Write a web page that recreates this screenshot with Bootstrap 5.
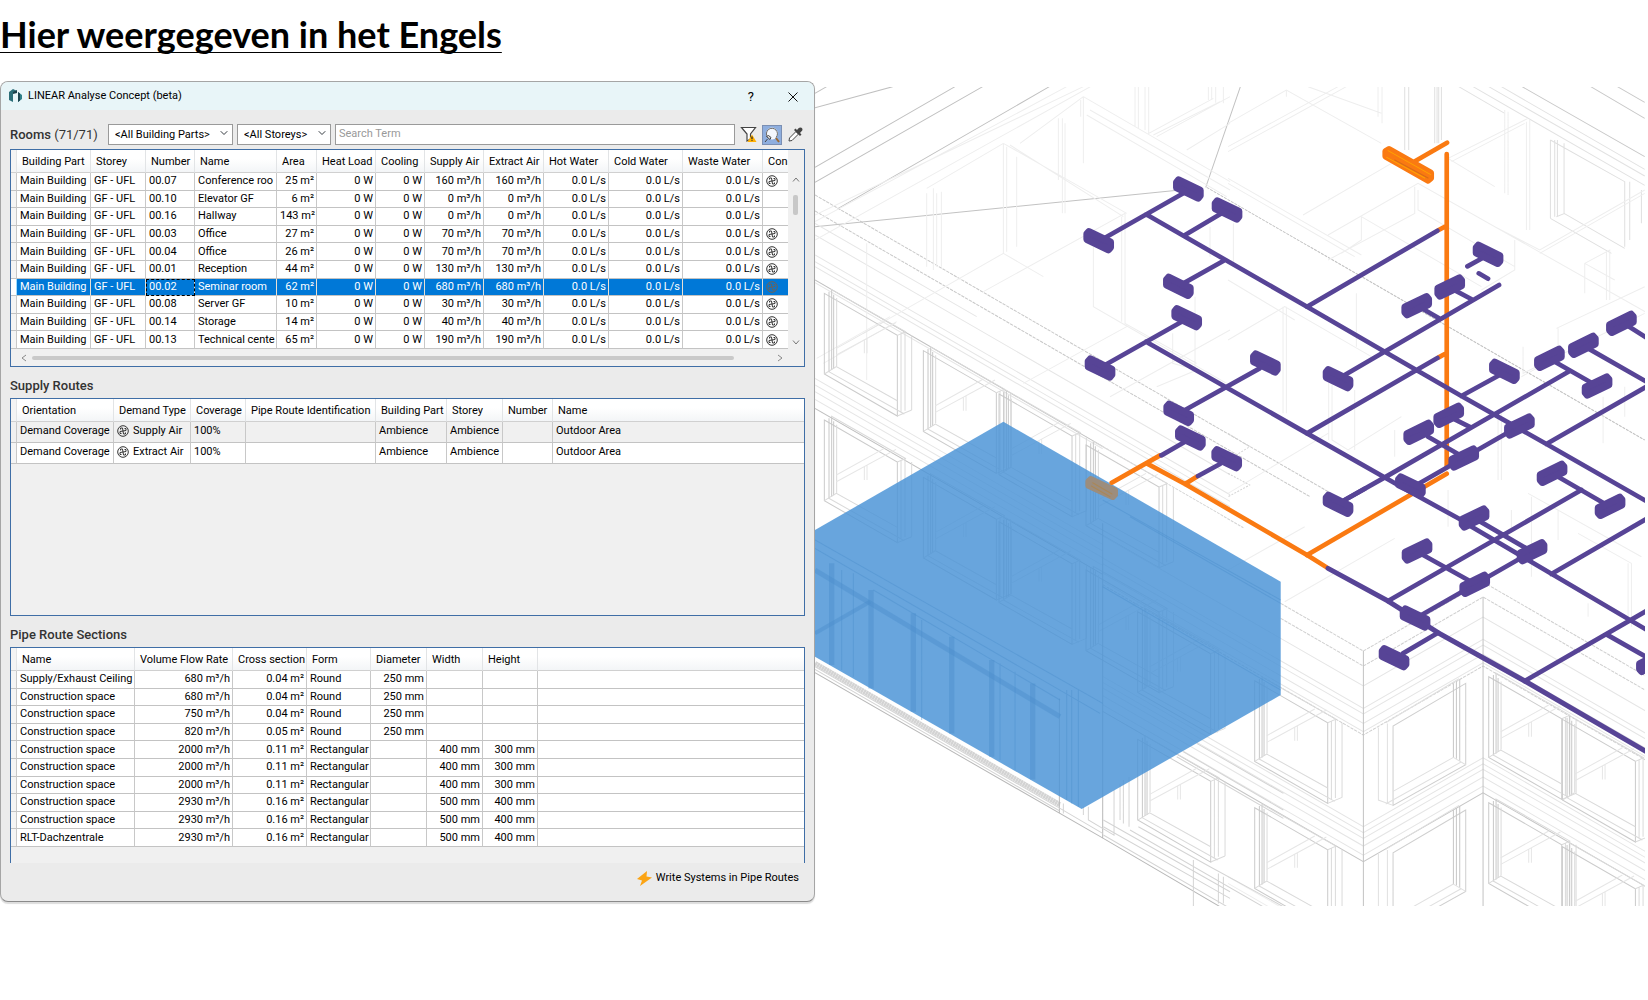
<!DOCTYPE html>
<html lang="nl">
<head>
<meta charset="utf-8">
<meta name="viewport" content="width=device-width, initial-scale=1">
<title>LINEAR Analyse Concept</title>
<link href="https://cdn.jsdelivr.net/npm/bootstrap@5.3.0/dist/css/bootstrap.min.css" rel="stylesheet">
<style>
  body { font-family: Roboto, "Open Sans", sans-serif; color: #000; background: #fff; }
  .page-title { font: 700 36px/40px Lato, sans-serif; padding-top: 14px; margin-bottom: 27px; text-decoration: underline; text-decoration-thickness: 1px; text-underline-offset: 4px; text-decoration-skip-ink: none; }
  .stage { align-items: flex-start; }
  .dialog { flex: 0 0 49.45%; min-width: 800px; background: #ebebeb; border: 1px solid #a5a5a5; border-bottom-color: #8a8a8a; border-radius: 8px; box-shadow: 0 2px 1px #ddd; overflow: hidden; font-size: 11px; line-height: 16px; }
  .titlebar { height: 28px; background: #e8f5f8; padding: 0 0 0 8px; }
  .titlebar button { width: 42px; height: 26px; padding: 0; border: 0; background: none; line-height: 1; font-size: 13px; }
  .app-mark { margin-right: 6px; }
  .dialog-body { padding: 14px 9px 13px; }
  .section-title { font-size: 13px; line-height: 20px; font-weight: 500; color: #333; margin: 9px 0 2px; }
  .toolbar { height: 21px; gap: 4px; margin-bottom: 4px; }
  .toolbar .section-title { width: 94px; margin: 0; }
  .toolbar .form-select, .toolbar .form-control { height: 21px; min-height: 21px; font-size: 11px; line-height: 16px; border: 1px solid #9a9a9a; border-radius: 0; padding: 1px 6px; color: #000; }
  .toolbar .form-select { width: 125px; background-size: 8px 8px; background-position: right 4px top 4px; padding-right: 14px; }
  .toolbar .form-select.storeys { width: 94px; }
  .toolbar .form-control { width: auto; min-width: 0; flex: 1; padding: 0 3px 2px; }
  .toolbar .form-control::placeholder { color: #999; }
  .tool { width: 19px; height: 20px; padding: 0; border: 0; background: none; display: flex; align-items: center; justify-content: center; }
  .tool.pressed { width: 20px; background: #8eaede; border: 1px solid #7b8fb3; }
  .panel { border: 1px solid #3f6ea6; background: #f0f0f0; height: 218px; }
  .panel.open-end { border-bottom: 0; height: 216px; }
  .grid-clip { overflow: hidden; flex: 1; min-width: 0; }
  table.datagrid { table-layout: fixed; width: 100%; border-collapse: separate; border-spacing: 0; background: #fff; }
  .datagrid th, .datagrid td { font-weight: 400; padding: 0 2px 0 3px; height: 17px; line-height: 16px; white-space: nowrap; overflow: hidden; border-right: 1px solid #c8c8c8; border-bottom: 1px solid #c3c3c3; }
  .datagrid th { height: 22px; line-height: 20px; padding: 2px 0 0 5px; background: linear-gradient(#fff 40%, #f3f5f7); border-right-color: #e2e4e6; border-bottom-color: #d0d0d0; }
  .datagrid td:first-child, .datagrid th:first-child { padding: 0; background: #f4f4f4; }
  .datagrid td.num { text-align: right; }
  .ten-rows { height: 199px; }
  .chosen td { background: #0078d7; color: #fff; border-right-color: #e8e0d4; }
  .chosen td:first-child { background: #fff; border-right-color: #9fdcff; }
  .chosen .focus-cell { outline: 1px dashed #000; outline-offset: -1px; }
  .chosen .fan { color: #76604f; }
  .datagrid.routes td { height: 21px; line-height: 18px; vertical-align: top; }
  .datagrid.routes tr.muted-row td { background: #f0f0f0; }
  .datagrid .filler { border-right: 0; }
  .fan { width: 12px; height: 12px; color: #333; display: block; }
  .v-scroll { width: 16px; padding: 27px 0 4px; }
  .v-thumb { width: 5px; height: 20px; border-radius: 2px; background: #c8c8c8; margin-top: 13px; }
  .h-scroll { height: 17px; padding: 0 20px 0 9px; }
  .h-thumb { height: 4px; border-radius: 2px; background: #c9c9c9; flex: 1; margin: 0 42px 0 4px; }
  .write-btn { border: 0; background: none; padding: 0 6px; font-size: 11px; line-height: 20px; margin-top: 5px; }
  .scene { flex: 1 1 0; min-width: 0; margin: 6px 3px 0 0; }
  .scene svg { display: block; width: 100%; height: auto; }
</style>
<script src="https://cdn.jsdelivr.net/npm/bootstrap@5.3.0/dist/js/bootstrap.bundle.min.js"></script>
</head>
<body>
<svg width="0" height="0" class="position-absolute" aria-hidden="true">
  <symbol id="fan" viewBox="0 0 12 12"><circle cx="6" cy="6" r="5.300" fill="none" stroke="currentColor"/><path d="M6 6 5.500 3H3.500V4.500M6 6 9 5.500V3.500H7.500M6 6 6.500 9H8.500V7.500M6 6 3 6.500V8.500H4.500" fill="none" stroke="currentColor"/></symbol>
</svg>

<h1 class="page-title">Hier weergegeven in het Engels</h1>

<main class="stage d-flex">
  <section class="dialog" aria-label="LINEAR Analyse Concept (beta)">
    <header class="titlebar d-flex align-items-center">
      <svg width="13" height="14" viewBox="0 0 13 14" class="app-mark"><path d="M0 3 4 0l4 2v2L4 3v10l-4-2Z" fill="#2b6e78"/><path d="M4 3 8 1v3L4 5Z" fill="#1c3f49"/><path d="M9 3l4 3v4l-4 3Z" fill="#2f7f88"/><path d="M9 3l2 1.500v7L9 13Z" fill="#1d4650"/></svg>
      <span class="me-auto">LINEAR Analyse Concept (beta)</span>
      <button type="button" aria-label="Help">?</button>
      <button type="button" aria-label="Close"><svg width="10" height="10" viewBox="0 0 10 10"><path d="M.5.5l9 9m0-9l-9 9" stroke="#111" fill="none"/></svg></button>
    </header>

    <div class="dialog-body">
      <div class="toolbar d-flex align-items-center">
        <h2 class="section-title">Rooms <span class="fw-normal">(71/71)</span></h2>
        <select class="form-select" aria-label="Building part"><option>&lt;All Building Parts&gt;</option></select>
        <select class="form-select storeys" aria-label="Storey"><option>&lt;All Storeys&gt;</option></select>
        <input class="form-control" type="text" placeholder="Search Term" aria-label="Search Term">
        <button class="tool" type="button" aria-label="Filter"><svg width="17" height="17" viewBox="0 0 17 17"><path d="M1.500 1.500h14L10.500 8v5l-3.500 2V8Z" fill="#fff" stroke="#444" stroke-width="1.200"/><path d="M12 8.500 16.500 16H7.500Z" fill="#ffb000"/><path d="M12 10.500v2.500m0 .8v1" stroke="#222" stroke-width="1.200"/></svg></button>
        <button class="tool pressed" type="button" aria-label="Zoom to room"><svg width="18" height="18" viewBox="0 0 18 18"><circle cx="9" cy="7.500" r="5.500" fill="#f4f7fc" stroke="#fff"/><path d="M4.500 11A5.500 5.500 0 1 1 13 11.500" fill="none" stroke="#666"/><path d="m13 12 3 4" stroke="#9b6a35" stroke-width="2"/><path d="M2 16l2.500-3M3.500 10.500l3.500 3 1-2-2.500-2Z" stroke="#444" fill="#ddd"/></svg></button>
        <button class="tool" type="button" aria-label="Pick"><svg width="15" height="15" viewBox="0 0 15 15"><path d="M1 14l.5-3L8 4.500 10.500 7 4 13.500Z" fill="#fff" stroke="#444"/><path d="M6 3l6 6 1.500-1.500L12 6l2-2.200Q15.200 2 13.500.8 12-.2 10.500 1.200L9 3 7.500 1.500Z" fill="#444"/></svg></button>
      </div>

      <div class="panel">
        <div class="d-flex">
          <div class="grid-clip">
            <table class="datagrid ten-rows" id="rooms">
              <colgroup><col style="width:6px"><col style="width:74px"><col style="width:55px"><col style="width:49px"><col style="width:82px"><col style="width:40px"><col style="width:59px"><col style="width:49px"><col style="width:59px"><col style="width:60px"><col style="width:65px"><col style="width:74px"><col style="width:80px"><col></colgroup>
              <thead><tr><th></th><th>Building Part</th><th>Storey</th><th>Number</th><th>Name</th><th>Area</th><th>Heat Load</th><th>Cooling</th><th>Supply Air</th><th>Extract Air</th><th>Hot Water</th><th>Cold Water</th><th>Waste Water</th><th class="filler">Con</th></tr></thead>
              <tbody></tbody>
            </table>
          </div>
          <div class="v-scroll d-flex flex-column align-items-center">
            <svg width="8" height="5" viewBox="0 0 8 5"><path d="M1 4.500l3-3.500 3 3.500" fill="none" stroke="#777"/></svg>
            <div class="v-thumb"></div>
            <svg class="mt-auto" width="8" height="5" viewBox="0 0 8 5"><path d="M1 .5L4 4 7 .5" fill="none" stroke="#777"/></svg>
          </div>
        </div>
        <div class="h-scroll d-flex align-items-center">
          <svg width="8" height="8" viewBox="0 0 8 8"><path d="M6 1L2 4l4 3" fill="none" stroke="#888"/></svg>
          <div class="h-thumb"></div>
          <svg width="8" height="8" viewBox="0 0 8 8"><path d="M2 1l4 3-4 3" fill="none" stroke="#888"/></svg>
        </div>
      </div>

      <h2 class="section-title">Supply Routes</h2>
      <div class="panel">
        <table class="datagrid routes">
          <colgroup><col style="width:6px"><col style="width:97px"><col style="width:77px"><col style="width:55px"><col style="width:130px"><col style="width:71px"><col style="width:56px"><col style="width:50px"><col></colgroup>
          <thead><tr><th></th><th>Orientation</th><th>Demand Type</th><th>Coverage</th><th>Pipe Route Identification</th><th>Building Part</th><th>Storey</th><th>Number</th><th class="filler">Name</th></tr></thead>
          <tbody>
            <tr class="muted-row"><td></td><td>Demand Coverage</td><td><span class="d-flex align-items-center gap-1"><svg class="fan"><use href="#fan"/></svg>Supply Air</span></td><td>100%</td><td></td><td>Ambience</td><td>Ambience</td><td></td><td class="filler">Outdoor Area</td></tr>
            <tr><td></td><td>Demand Coverage</td><td><span class="d-flex align-items-center gap-1"><svg class="fan"><use href="#fan"/></svg>Extract Air</span></td><td>100%</td><td></td><td>Ambience</td><td>Ambience</td><td></td><td class="filler">Outdoor Area</td></tr>
          </tbody>
        </table>
      </div>

      <h2 class="section-title">Pipe Route Sections</h2>
      <div class="panel open-end">
        <table class="datagrid ten-rows" id="sections">
          <colgroup><col style="width:6px"><col style="width:118px"><col style="width:98px"><col style="width:74px"><col style="width:64px"><col style="width:56px"><col style="width:56px"><col style="width:55px"><col></colgroup>
          <thead><tr><th></th><th>Name</th><th>Volume Flow Rate</th><th>Cross section</th><th>Form</th><th>Diameter</th><th>Width</th><th>Height</th><th class="filler"></th></tr></thead>
          <tbody></tbody>
        </table>
      </div>
      <div class="text-end"><button class="write-btn" type="button"><svg class="me-1" width="15" height="15" viewBox="0 0 15 15"><path d="M10 0 0 8l5 1.500L3 15 15 6.500 9.500 5.500Z" fill="#fba414"/></svg>Write Systems in Pipe Routes</button></div>
    </div>
  </section>

  <div class="scene">
  <svg viewBox="815 87 830 819" role="img" aria-label="Building model with pipe routes">
    <defs>
      <path id="nodeA" d="M-35-20-29-27 35 4V20L29 27-35-4Z"/>
      <path id="nodeB" d="M35-20 29-27-35 4V20L-29 27 35-4Z"/>
      <g id="win">
        <path d="M0 0 219 126V368L0 242Z" stroke="#cbcbcb"/>
        <path d="M14-5V236M22-10V230M28 4V226" stroke="#c8c8c8"/>
        <path d="M37 14V218M0 242 36 220 219 322M12 234 240 362M219 368 262 350M20-12 245 116M230 120V358M242 116V352M262 126V350M219 126 242 116" stroke="#dadada"/>
        <path d="M36 165 180 85M36 185 215 88M120 180V140M128 180V135" stroke="#e6e6e6"/>
      </g>
      <g id="winR">
        <path d="M0 0-218 128V366L0 244Z" stroke="#cfcfcf"/>
        <path d="M-18-12V232M-28-6V226M-37 0V222" stroke="#c6c6c6"/>
        <path d="M-37 222-218 324M0 244-37 222M-14 236-240 362M-235 120V358M-262 132V350L-218 366M-240 118-20-14" stroke="#e0e0e0"/>
      </g>
      <path id="level" d="M-376-451 0-234 406 0 765-207 1260 79"/>
    </defs>

    <!-- wireframe building -->
    <g fill="none" stroke-width="3">
      <g transform="translate(810 80) scale(.333333)">
        <path d="M15 262 435 20M15 307 518 20M85 385 718 20M15 40 50 20M15 83 248 20" stroke="#c0c0c0"/>
        <path d="M15 440 1110 330M1187 322 1291 20" stroke="#c2c2c2"/>
        <path d="M15 345 1260 1065 1560 1238M15 393 1260 1112 1500 1250" stroke="#c8c8c8" stroke-dasharray="10 3"/>
        <path d="M1190 322 2504 1080" stroke="#c2c2c2" stroke-dasharray="9 3"/>
        <path d="M15 600 878 1099M15 985 878 1483" stroke="#c0c0c0"/>
        <path d="M878 1099 1300 1343" stroke="#d4d4d4" stroke-dasharray="9 3"/>
        <path d="M15 608 878 1106M15 545 1260 1264M15 525 1260 1244M15 465 1260 1184M15 430 500 710M15 560 1260 1280M15 895 878 1393M15 915 878 1413M15 935 878 1433M15 958 878 1456" stroke="#e6e6e6"/>
        <path d="M15 425 770 20M15 405 820 20M15 480 850 15M40 850 260 725M20 835 240 710M170 490V900M350 340V560M370 325V570M380 340V560M394 335V560M580 190V520L160 760M590 200V515M580 190 950 400M600 195 940 410M580 190 350 325M620 230V500M580 520 700 590M520 635 945 400V730L1160 850M935 410V725M850 500V680L945 735M745 115V300M757 115V400M765 130V400M820 50V250M812 60V110M820 50 630 190M820 50 1260 305M830 105 1250 350M840 90 1260 330M975 20V140M985 20V145M1005 20V150M1016 20V160L1210 55M1030 165 1230 65M1195 20V60M1205 20V60M1217 20V68M1240 20V70M1040 170 1260 50M1130 210 1260 130M1155 650V870M1088 760V850L1160 870 1040 920M950 740 640 910M945 735 1250 910M900 950 1260 750M1200 440V530M1270 430V560" stroke="#eee"/>
        <use href="#win" x="43" y="640"/><use href="#win" x="340" y="812"/><use href="#win" x="567" y="942"/><use href="#win" x="828" y="1095"/>
        <use href="#win" x="43" y="1020"/><use href="#win" x="340" y="1192"/><use href="#win" x="567" y="1325"/><use href="#win" x="828" y="1470"/>
      </g>
      <g transform="translate(1228 80) scale(.333333)">
        <path d="M882 20 1250 230M1088 20 1250 115M1168 20 1250 67" stroke="#c8c8c8"/>
        <path d="M782 20 1250 288M820 20 1250 268M735 20 1250 316M692 20 830 100" stroke="#e2e2e2"/>
        <path d="M620 20V190M627 20V190M632 20V190M640 20V180M530 20V210M542 20V210M967 180V415M980 180V410M988 180V410M1008 190V400M967 180 1190 305V500M967 415 1150 520M1008 400 1190 505M985 410 1010 400M1205 305V480M1240 330V430" stroke="#dfdfdf"/>
        <path d="M0 130 175 30 460 190M0 215 355 20M0 200 330 20M175 30V50M240 20 460 100M462 20V130M450 20V110M225 405 490 250M900 115 660 235M890 130 670 245M905 120V450M895 125V450M660 235 800 320M300 465 570 310 1260 700M560 320V400L300 540M570 330V390L860 560M400 410V480L340 520M400 410 760 620M800 440 935 510 1250 330M860 480V570L760 630M935 520 1250 340M1070 550V640M1070 550 1145 510V660M1135 515V660M1070 550 1160 600M990 745V830L880 890M985 745 1250 620M885 800V880L1250 700M830 90V340M840 95V345M0 295 400 525M0 310 380 530M165 680V1000M175 680V1000M0 780 170 680 430 830M385 640V800M302 900V1080M312 900V1080L360 1110 520 1010M380 930V1110M500 1050V1130M0 1240 300 1060M0 600 200 720M1125 950V1090M1190 920V1010M810 1000V1200M820 1000V1200" stroke="#eee"/>
        <path d="M0 1060 65 1100 0 1140M0 1180 65 1215 0 1250" stroke="#d4d4d4" stroke-dasharray="6 4"/>
      </g>
      <g transform="translate(1228 490) scale(.333333)">
        <g stroke="#cfcfcf" stroke-dasharray="10 3"><path d="M158 340 406 483 765 276 1260 562"/><path d="M158 385 406 528 765 321 1260 605"/><use href="#level" y="735"/></g>
        <g stroke="#e5e5e5"><use href="#level" y="588"/><use href="#level" y="655"/><use href="#level" y="672"/><use href="#level" y="700"/><use href="#level" y="725"/><use href="#level" y="1010"/><use href="#level" y="1028"/><use href="#level" y="1045"/><use href="#level" y="1068"/><use href="#level" y="1095"/></g>
        <use href="#level" y="1115" stroke="#c6c6c6"/>
        <path d="M406 483V1250M765 320V1250" stroke="#c2c2c2"/>
        <path d="M660 0V110M850 60V120M1200 220V400M1210 220V410M1210 220 1050 130M900 10 1240 200M990 60V150M1080 340V380M910 20V260M0 240 230 110M170 335 500 145M0 1160 400 1390M0 1180 400 1410" stroke="#eee"/>
        <use href="#win" x="80" y="572"/><use href="#win" x="80" y="953"/><use href="#winR" x="713" y="580"/><use href="#winR" x="713" y="960"/>
        <use href="#win" x="782" y="560"/><use href="#win" x="1003" y="688"/><use href="#win" x="782" y="938"/><use href="#win" x="1003" y="1070"/>
      </g>
      <g transform="translate(810 490) scale(.333333)">
        <path d="M15 520 750 944" stroke="#d3d3d3" stroke-width="15" stroke-dasharray="7 1"/>
        <path d="M15 548 880 1045 1230 1250M878 100V1045M748 625V968" stroke="#b8b8b8"/>
        <path d="M15 530 750 955 878 1030M15 538 748 962M1150 1110V1250M880 1035 1260 1255M880 990 1260 1205M880 1010 1260 1225M835 950V990L912 1035V900M957 860V1010M940 870V1000M930 880V990M1100 800 1420 985M1120 785 1420 960M1160 760 1420 910M985 1010 1200 1130 1420 1250M960 1020 1420 1285M1225 1150V1240M1240 1160V1240M760 940V970M820 950V975" stroke="#d4d4d4"/>
        <use href="#win" x="983" y="365"/><use href="#win" x="983" y="748"/>
      </g>
    </g>

    <!-- selected room -->
    <g transform="translate(810 490) scale(.333333)">
      <path d="M580-205 1412 275V615L815 957 15 500V120Z" fill="#4b94d7" fill-opacity=".84"/>
      <g fill="none" stroke="#4b8ecd" stroke-opacity=".45">
        <path d="M15 240 750 680" stroke-width="15"/>
        <path d="M15 430 180 335" stroke-width="12"/>
        <path d="M65 220V525M183 300V595M310 370V665" stroke-width="16"/>
        <path d="M425 440V730M545 510V800M668 580V868" stroke-width="16"/>
        <path d="M95 240V540M130 250V560M335 390V690M570 520V810M615 545V840M770 600V930M785 600V940M805 600V950M15 150 878 640M15 175 870 670M878 290 1412 600M190 300 750 630M960 80 1412 340M878 30 1412 330" stroke-width="3"/>
      </g>
    </g>

    <!-- orange routes -->
    <g fill="none" stroke="#fa7a12" stroke-width="14" stroke-linecap="round" stroke-linejoin="round">
      <g transform="translate(810 80) scale(.333333)"><path d="M905 1208 1050 1126M1010 1150 1125 1212 1491 1425 1550 1462M1125 1212 1160 1190"/>
      <path d="M-40-19-33-26 40 8V21L33 28-40-6Z" transform="translate(875 1223)" fill="#9c8d7d" stroke="#9c8d7d" stroke-width="18"/><path d="M848 1208 906 1242M844 1218 900 1250" stroke="#aa8757" stroke-width="3"/></g>
      <g transform="translate(1228 80) scale(.333333)"><path d="M656 222V1162M562 243 657 188M632 450 650 440M632 832 650 822M656 1181 237 1425"/>
      <path d="M473 214 483 208 608 279V294L600 301 473 229Z" fill="#fa7a12" stroke-width="20"/><path d="M480 212 608 284M476 232 590 294" stroke="#ffa200" stroke-width="3"/><path d="M500 240 600 294" stroke="#d86d18" stroke-width="3"/></g>
    </g>

    <!-- purple routes -->
    <g fill="none" stroke="#574496" stroke-width="14" stroke-linecap="round" stroke-linejoin="round">
      <g transform="translate(810 80) scale(.333333)"><path d="M885 473 1120 340M1008 403 1491 680M1125 465 1235 400M1120 610 1245 540M885 855 1115 725M1008 785 1491 1060M1125 990 1349 865M1054 1126 1125 1085M1164 1188 1230 1152"/></g>
      <g transform="translate(1228 80) scale(.333333)"><path d="M237 680 470 815 700 948 955 1092 1270 1272M237 680 628 452M237 1060 547 1236 700 1320M237 1060 628 834M350 885 813 615M590 690 637 717M682 632 735 660M718 559 765 533M752 580 780 596M700 948 815 885M1025 873 465 1195 350 1260M980 845 1090 908M1080 805 1260 908M1200 738 1260 776M955 1092 1260 917M600 1070 690 1122M680 1018 728 1042M874 1038 560 1218M990 1190 1125 1268"/></g>
      <g transform="translate(1228 490) scale(.333333)"><path d="M350 30 410-4M1060 0 480 333M1260 84 970 252M700 92 900 210 1260 422M740 85 895 175M630 428 525 490M575 378 912 185M585 195 720 270M890 573 1260 360M1135 433 1260 504"/><path d="M300 235 480 333 630 428 890 573 1260 788" stroke-width="15"/></g>
    </g>

    <!-- outlets -->
    <g fill="#574496" stroke="#574496" stroke-width="22" stroke-linejoin="round">
      <g transform="translate(810 80) scale(.333333)">
        <use href="#nodeA" x="1135" y="327"/><use href="#nodeA" x="1251" y="390"/><use href="#nodeA" x="866" y="482"/><use href="#nodeA" x="1105" y="619"/><use href="#nodeA" x="1130" y="713"/><use href="#nodeA" x="870" y="864"/><use href="#nodeA" x="1106" y="1000"/><use href="#nodeA" x="1141" y="1074"/><use href="#nodeA" x="1250" y="1136"/>
      </g>
      <g transform="translate(1228 80) scale(.333333)">
        <use href="#nodeA" x="112" y="849"/><use href="#nodeA" x="330" y="896"/><use href="#nodeA" x="829" y="874"/><use href="#nodeA" x="780" y="523"/><use href="#nodeA" x="547" y="1218"/><use href="#nodeA" x="330" y="1273"/>
        <use href="#nodeB" x="665" y="621"/><use href="#nodeB" x="566" y="677"/><use href="#nodeB" x="1180" y="730"/><use href="#nodeB" x="1066" y="796"/><use href="#nodeB" x="964" y="835"/><use href="#nodeB" x="1107" y="918"/><use href="#nodeB" x="662" y="1006"/><use href="#nodeB" x="572" y="1057"/><use href="#nodeB" x="707" y="1134"/><use href="#nodeB" x="874" y="1038"/><use href="#nodeB" x="972" y="1180"/>
      </g>
      <g transform="translate(1228 490) scale(.333333)">
        <use href="#nodeA" x="561" y="384"/><use href="#nodeA" x="498" y="503"/>
        <use href="#nodeB" x="738" y="84"/><use href="#nodeB" x="567" y="183"/><use href="#nodeB" x="740" y="283"/><use href="#nodeB" x="912" y="185"/><use href="#nodeB" x="1146" y="49"/><use href="#nodeB" x="1270" y="517"/>
      </g>
    </g>
  </svg>
  </div>
</main>

<script>
  const fan = '<svg class="fan"><use href="#fan"/></svg>';
  const rooms = [
    ['00.07', 'Conference roo', 25, 160], ['00.10', 'Elevator GF', 6, 0], ['00.16', 'Hallway', 143, 0],
    ['00.03', 'Office', 27, 70], ['00.04', 'Office', 26, 70], ['00.01', 'Reception', 44, 130],
    ['00.02', 'Seminar room', 62, 680], ['00.08', 'Server GF', 10, 30], ['00.14', 'Storage', 14, 40],
    ['00.13', 'Technical cente', 65, 190]
  ];
  const num = v => `<td class="num">${v}</td>`;
  document.querySelector('#rooms tbody').innerHTML = rooms.map(([no, name, area, air]) => {
    const chosen = no === '00.02';
    return `<tr${chosen ? ' class="chosen"' : ''}><td></td><td>Main Building</td><td>GF - UFL</td><td${chosen ? ' class="focus-cell"' : ''}>${no}</td><td>${name}</td>` +
      num(area + ' m²') + num('0 W').repeat(2) + num(air + ' m³/h').repeat(2) + num('0.0 L/s').repeat(3) +
      `<td class="filler">${air ? fan : ''}</td></tr>`;
  }).join('');

  const sections = [
    ['Supply/Exhaust Ceiling', 680, '0.04', 'Round', 250], ['Construction space', 680, '0.04', 'Round', 250],
    ['Construction space', 750, '0.04', 'Round', 250], ['Construction space', 820, '0.05', 'Round', 250],
    ['Construction space', 2000, '0.11', 'Rectangular', 0, 400, 300], ['Construction space', 2000, '0.11', 'Rectangular', 0, 400, 300],
    ['Construction space', 2000, '0.11', 'Rectangular', 0, 400, 300], ['Construction space', 2930, '0.16', 'Rectangular', 0, 500, 400],
    ['Construction space', 2930, '0.16', 'Rectangular', 0, 500, 400], ['RLT-Dachzentrale', 2930, '0.16', 'Rectangular', 0, 500, 400]
  ];
  const mm = v => num(v ? v + ' mm' : '');
  document.querySelector('#sections tbody').innerHTML = sections.map(([name, flow, cross, form, d, w, h]) =>
    `<tr><td></td><td>${name}</td>${num(flow + ' m³/h')}${num(cross + ' m²')}<td>${form}</td>${mm(d)}${mm(w)}${mm(h)}<td class="filler"></td></tr>`
  ).join('');
</script>
</body>
</html>
